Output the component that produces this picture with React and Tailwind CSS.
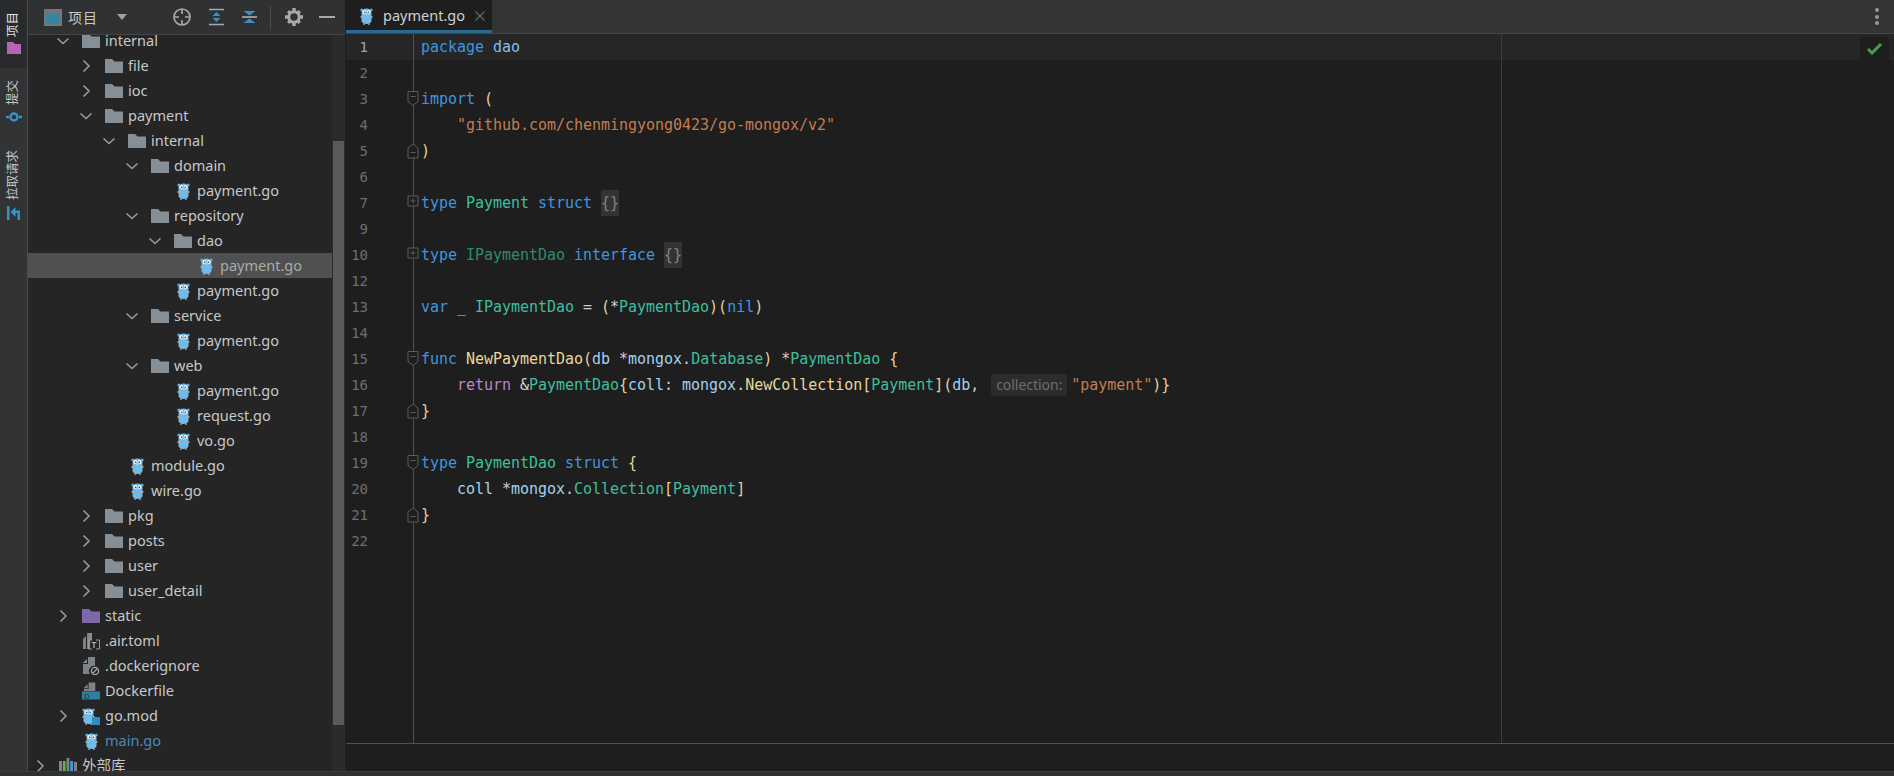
import { Fragment } from "react";

const ui = { fontFamily: '"Noto Sans", "Noto Sans CJK SC", sans-serif' };

// syntax colours
const kw = "text-[#3d96e0]";
const pkg = "text-[#7fbfea]";
const id = "text-[#a3d0ef]";
const ty = "text-[#3fbf9f]";
const tyDim = "text-[#2f8a70]";
const fn = "text-[#e8d79a]";
const br = "text-[#e6cf9f]";
const str = "text-[#c47c50]";
const op = "text-[#cfcfcf]";
const ret = "text-[#c083c9]";

const Gopher = ({ className = "" }) => (
  <svg width="13" height="18" viewBox="0 0 13 18" className={className}>
    <circle cx="1.8" cy="3" r="1.5" fill="#5fa8d8" />
    <circle cx="11.2" cy="3" r="1.5" fill="#5fa8d8" />
    <path d="M1.5 6c0-3 2-4.500 5-4.500s5 1.500 5 4.500v7.500c0 2.300-2 3.500-5 3.500s-5-1.200-5-3.500z" fill="#6fbbec" />
    <rect x="0.6" y="9" width="1.4" height="2" fill="#c9a27a" />
    <rect x="11" y="9" width="1.400" height="2" fill="#c9a27a" />
    <rect x="3" y="16.500" width="2" height="1.200" fill="#c9a27a" />
    <rect x="8" y="16.500" width="2" height="1.200" fill="#c9a27a" />
    <circle cx="4.300" cy="5" r="1.900" fill="#f2f6f8" />
    <circle cx="8.700" cy="5" r="1.900" fill="#f2f6f8" />
    <circle cx="4.700" cy="5.200" r="0.800" fill="#26323a" />
    <circle cx="8.300" cy="5.200" r="0.800" fill="#26323a" />
    <ellipse cx="6.500" cy="7.300" rx="1.100" ry="0.800" fill="#d9c7a8" />
  </svg>
);

const Folder = ({ color = "#868e96" }) => (
  <svg width="18" height="14" viewBox="0 0 18 14">
    <path d="M0 0h7l2.500 2.500H18V14H0z" fill={color} />
  </svg>
);

const Chevron = ({ open }) => (
  <svg width="16" height="16" viewBox="0 0 16 16" fill="none" stroke="#9c9c9c" strokeWidth="1.500">
    {open ? <path d="M2.500 5.500L8 10.500l5.500-5" /> : <path d="M5.500 2.500L11 8l-5.500 5.500" />}
  </svg>
);

const TomlIcon = () => (
  <svg width="18" height="18" viewBox="0 0 18 18">
    <path d="M1 7l3-3v13H1zM5 1h2v16H5z" fill="#7d8286" />
    <path d="M7 1h3v7H7zM7 8h1v9H7z" fill="#8a8f93" />
    <path d="M10 8H6.500v9H10M14 8h3.500v9H14" fill="none" stroke="#9a9a9a" strokeWidth="1" />
    <path d="M9.500 10.500h5M12 10.500V16" stroke="#b5b5b5" strokeWidth="1.200" />
  </svg>
);

const IgnoreIcon = () => (
  <svg width="18" height="18" viewBox="0 0 18 18">
    <path d="M1 5.500L5 2v4H1zM6 0h7v9a5 5 0 0 0-5 8H1V7h5z" fill="#7d8286" />
    <circle cx="13" cy="14" r="3.600" fill="none" stroke="#a5a5a5" strokeWidth="1.300" />
    <path d="M10.800 16.200l4.400-4.400" stroke="#a5a5a5" strokeWidth="1.300" />
  </svg>
);

const DockerIcon = () => (
  <svg width="19" height="18" viewBox="0 0 19 18">
    <path d="M2 5.500L6 2v4H2zM7 0h7v9H2V7h5z" fill="#7d8286" />
    <rect x="0" y="9.500" width="19" height="8.500" fill="#2f7f9f" />
    <text x="2.500" y="17" fontSize="8" fill="#12323f" fontFamily="Liberation Sans">D</text>
  </svg>
);

const GoModIcon = () => (
  <span className="relative block h-[18px] w-[18px]">
    <Gopher />
    <span className="absolute right-0 bottom-0 h-[8px] w-[8px] bg-[#2f8cc4]" />
  </span>
);

const LibIcon = () => (
  <svg width="18" height="16" viewBox="0 0 18 16">
    <rect x="0" y="3" width="3" height="13" fill="#7f8487" />
    <rect x="3.800" y="3" width="2.800" height="13" fill="#62b543" />
    <rect x="7.500" y="0" width="2.800" height="16" fill="#7f8487" />
    <rect x="11.200" y="3" width="2.800" height="13" fill="#389fd6" />
    <rect x="15" y="4" width="3" height="12" fill="#7f8487" />
  </svg>
);

const tree = [
  { d: 0, open: true, name: "internal", icon: "folder" },
  { d: 1, open: false, name: "file", icon: "folder" },
  { d: 1, open: false, name: "ioc", icon: "folder" },
  { d: 1, open: true, name: "payment", icon: "folder" },
  { d: 2, open: true, name: "internal", icon: "folder" },
  { d: 3, open: true, name: "domain", icon: "folder" },
  { d: 4, name: "payment.go", icon: "go" },
  { d: 3, open: true, name: "repository", icon: "folder" },
  { d: 4, open: true, name: "dao", icon: "folder" },
  { d: 5, name: "payment.go", icon: "go", selected: true },
  { d: 4, name: "payment.go", icon: "go" },
  { d: 3, open: true, name: "service", icon: "folder" },
  { d: 4, name: "payment.go", icon: "go" },
  { d: 3, open: true, name: "web", icon: "folder" },
  { d: 4, name: "payment.go", icon: "go" },
  { d: 4, name: "request.go", icon: "go" },
  { d: 4, name: "vo.go", icon: "go" },
  { d: 2, name: "module.go", icon: "go" },
  { d: 2, name: "wire.go", icon: "go" },
  { d: 1, open: false, name: "pkg", icon: "folder" },
  { d: 1, open: false, name: "posts", icon: "folder" },
  { d: 1, open: false, name: "user", icon: "folder" },
  { d: 1, open: false, name: "user_detail", icon: "folder" },
  { d: 0, open: false, name: "static", icon: "static" },
  { d: 0, name: ".air.toml", icon: "toml" },
  { d: 0, name: ".dockerignore", icon: "ignore" },
  { d: 0, name: "Dockerfile", icon: "docker" },
  { d: 0, open: false, name: "go.mod", icon: "gomod" },
  { d: 0, name: "main.go", icon: "go", blue: true },
  { d: -1, open: false, name: "外部库", icon: "lib" },
];

const treeIcon = (icon) => {
  if (icon === "folder") return <Folder />;
  if (icon === "static") return <Folder color="#7f68a8" />;
  if (icon === "go") return <Gopher />;
  if (icon === "toml") return <TomlIcon />;
  if (icon === "ignore") return <IgnoreIcon />;
  if (icon === "docker") return <DockerIcon />;
  if (icon === "gomod") return <GoModIcon />;
  return <LibIcon />;
};

const Locate = () => (
  <svg width="20" height="20" viewBox="0 0 20 20" fill="none" stroke="#a8a8a8" strokeWidth="1.700">
    <circle cx="10" cy="10" r="8" />
    <path d="M10 2v5M10 13v5M2 10h5M13 10h5" />
  </svg>
);

const ExpandAll = () => (
  <svg width="18" height="18" viewBox="0 0 18 18">
    <path d="M1 1.500h15M1 16.500h15" stroke="#a8a8a8" strokeWidth="1.700" />
    <path d="M8.500 4l4 4h-8zM4.500 10h8l-4 4z" fill="#3592c4" />
  </svg>
);

const CollapseAll = () => (
  <svg width="18" height="18" viewBox="0 0 18 18">
    <path d="M1 9h15" stroke="#a8a8a8" strokeWidth="1.700" />
    <path d="M2.500 3h12l-6 4.500zM8.500 10.500l6 4.500h-12z" fill="#3592c4" />
  </svg>
);

const Gear = () => (
  <svg width="18" height="18" viewBox="0 0 18 18">
    <circle cx="9" cy="9" r="5.200" fill="none" stroke="#a8a8a8" strokeWidth="3" />
    <path d="M7.300 0h3.400v3H7.300zM7.300 15h3.400v3H7.300zM0 7.300h3v3.400H0zM15 7.300h3v3.400h-3zM2 4.300L4.300 2l2 2L4 6.300zM11.700 4L13.700 2 16 4.300l-2 2zM2 13.700L4 11.700 6.300 14l-2 2zM11.700 14l2.300-2.300 2 2-2.300 2.300z" fill="#a8a8a8" />
  </svg>
);

const Vtext = ({ children, className }) => (
  <span className={`rotate-180 text-[12.5px] leading-none [writing-mode:vertical-rl] [text-orientation:sideways] ${className}`}>{children}</span>
);

const Stripe = () => (
  <div className="flex w-[28px] shrink-0 flex-col border-r border-[#4a4c4e] bg-[#313335]" style={ui}>
    <div className="flex h-[68px] flex-col items-center gap-[5px] bg-[#282a2b] pt-[12px]">
      <Vtext className="text-[#e4e4e4]">项目</Vtext>
      <svg width="14" height="12" viewBox="0 0 14 12">
        <path d="M0 0h6l2 2h6v10H0z" fill="#b665b5" />
      </svg>
    </div>
    <div className="flex flex-col items-center gap-[6px] pt-[12px]">
      <Vtext className="text-[#c9c9c9]">提交</Vtext>
      <svg width="16" height="12" viewBox="0 0 16 12" fill="none" stroke="#3592c4">
        <circle cx="8" cy="6" r="3.500" strokeWidth="2.400" />
        <path d="M0 6h3M13 6h3" strokeWidth="2.400" />
      </svg>
    </div>
    <div className="flex flex-col items-center gap-[6px] pt-[27px]">
      <Vtext className="text-[#c9c9c9]">拉取请求</Vtext>
      <svg width="13" height="14" viewBox="0 0 13 14" fill="#3592c4">
        <path d="M0 0h2.500v14H0zM3.500 6L8.500 1v3.500H13V14h-2.500V7H8.500v4z" />
      </svg>
    </div>
  </div>
);

const ProjectPanel = () => (
  <div className="flex w-[318px] shrink-0 flex-col overflow-hidden border-r border-[#1e1e1e]" style={ui}>
    <div className="relative z-10 flex h-[35px] shrink-0 items-center border-b border-[#434547] bg-[#2f3133] pl-[16px]">
      <span className="flex h-[17px] w-[18px] items-end border-2 border-t-[4px] border-[#73777a]">
        <span className="block h-full w-full bg-[#38859f]" />
      </span>
      <span className="ml-[6px] w-[40px] text-[14px] tracking-[1px] text-[#c8c8c8]">项目</span>
      <span className="ml-[9px] h-0 w-0 border-x-[5px] border-t-[6px] border-x-transparent border-t-[#a0a0a0]" />
      <span className="ml-[45px] flex"><Locate /></span>
      <span className="ml-[16px] flex"><ExpandAll /></span>
      <span className="ml-[15px] flex"><CollapseAll /></span>
      <span className="ml-[11px] h-[23px] w-px bg-[#4c4e50]" />
      <span className="ml-[14px] flex"><Gear /></span>
      <span className="ml-[16px] h-[2px] w-[16px] bg-[#a8a8a8]" />
    </div>
    <div className="flex min-h-0 flex-1">
      <div className="-mt-[7px] min-w-0 flex-1 bg-[#252525]">
        {tree.map((row, i) => (
          <div
            key={i}
            className={`flex h-[25px] items-center ${row.selected ? "bg-[#4f5050]" : ""}`}
            style={{ paddingLeft: 27 + row.d * 23 }}
          >
            <span className="mr-[11px] flex w-[16px] shrink-0 justify-center">
              {row.open !== undefined && <Chevron open={row.open} />}
            </span>
            <span className="mr-[5px] flex w-[18px] shrink-0 items-center justify-center">{treeIcon(row.icon)}</span>
            <span
              className={`pb-[2px] text-[14.5px] leading-[20px] whitespace-nowrap ${
                row.selected ? "text-[#a9abad]" : row.blue ? "text-[#4a88b8]" : "text-[#c6c8ca]"
              }`}
            >
              {row.name}
            </span>
          </div>
        ))}
      </div>
      <div className="w-[13px] shrink-0 bg-[#2b2b2b] pt-[106px]">
        <div className="mx-auto h-[584px] w-[11px] bg-[#5a5a5a]" />
      </div>
    </div>
  </div>
);

const Fold = ({ kind }) => (
  <svg width="12" height="16" viewBox="0 0 12 16" className="absolute top-[5px] -right-[6px]" fill="#1e1e1e" stroke="#5c5c5c">
    {kind === "start" && <path d="M1 .500h10v10l-5 4-5-4zM3.500 5.500h5" />}
    {kind === "end" && <path d="M1 15v-10l5-4 5 4v10zM3.500 9.500h5" />}
    {kind === "plus" && <path d="M1 1h10v10H1zM3.500 6h5M6 3.500v5" />}
  </svg>
);

const code = [
  { n: 1, current: true, t: [["package", kw], [" "], ["dao", pkg]] },
  { n: 2, t: [] },
  { n: 3, fold: "start", t: [["import", kw], [" "], ["(", br]] },
  { n: 4, t: [['    "github.com/chenmingyong0423/go-mongox/v2"', str]] },
  { n: 5, fold: "end", t: [[")", br]] },
  { n: 6, t: [] },
  { n: 7, fold: "plus", t: [["type", kw], [" "], ["Payment", ty], [" "], ["struct", kw], [" "], ["{}", "folded"]] },
  { n: 9, t: [] },
  { n: 10, fold: "plus", t: [["type", kw], [" "], ["IPaymentDao", tyDim], [" "], ["interface", kw], [" "], ["{}", "folded"]] },
  { n: 12, t: [] },
  { n: 13, t: [["var", kw], [" _ ", id], ["IPaymentDao", ty], [" = ", op], ["(", br], ["*", op], ["PaymentDao", ty], [")(", br], ["nil", kw], [")", br]] },
  { n: 14, t: [] },
  { n: 15, fold: "start", t: [["func", kw], [" "], ["NewPaymentDao", fn], ["(", br], ["db", id], [" *", op], ["mongox", id], [".", op], ["Database", ty], [")", br], [" *", op], ["PaymentDao", ty], [" "], ["{", br]] },
  { n: 16, t: [["    "], ["return", ret], [" &", op], ["PaymentDao", ty], ["{", br], ["coll", id], [": ", op], ["mongox", id], [".", op], ["NewCollection", fn], ["[", br], ["Payment", ty], ["]", br], ["(", br], ["db", id], [", ", op], ["collection:", "hint"], ['"payment"', str], [")}", br]] },
  { n: 17, fold: "end", t: [["}", br]] },
  { n: 18, t: [] },
  { n: 19, fold: "start", t: [["type", kw], [" "], ["PaymentDao", ty], [" "], ["struct", kw], [" "], ["{", br]] },
  { n: 20, t: [["    "], ["coll", id], [" *", op], ["mongox", id], [".", op], ["Collection", ty], ["[", br], ["Payment", ty], ["]", br]] },
  { n: 21, fold: "end", t: [["}", br]] },
  { n: 22, t: [] },
];

const Token = ({ text, cls }) => {
  if (cls === "folded")
    return <span className="inline-block h-[26px] bg-[#333333] align-top text-[#858585]">{text}</span>;
  if (cls === "hint")
    return (
      <span
        className="mt-[2px] mr-[4px] ml-[3px] inline-block h-[22px] w-[76px] rounded-[3px] bg-[#2c2c2c] text-center align-top text-[14px] leading-[21px] text-[#6e6e6e]"
        style={ui}
      >
        {text}
      </span>
    );
  return <span className={cls}>{text}</span>;
};

const Editor = () => (
  <div className="flex min-w-0 flex-1 flex-col bg-[#1e1e1e]">
    <div className="flex h-[34px] shrink-0 items-stretch border-b border-[#464646] bg-[#333535]">
      <div className="flex w-[146px] items-center border-b-[3px] border-[#2a6a92] bg-[#1e1e1e] pt-[2px] pl-[14px]" style={ui}>
        <Gopher />
        <span className="ml-[10px] text-[14.5px] text-[#d0d0d0]">payment.go</span>
        <svg width="10" height="10" viewBox="0 0 10 10" className="ml-[10px]" stroke="#6a6a6a" strokeWidth="1.100">
          <path d="M.5.500l9 9M9.500.500l-9 9" />
        </svg>
      </div>
      <div className="mr-[15px] ml-auto flex flex-col justify-center gap-[2.500px]">
        <span className="h-[4px] w-[4px] rounded-full bg-[#9a9a9a]" />
        <span className="h-[4px] w-[4px] rounded-full bg-[#9a9a9a]" />
        <span className="h-[4px] w-[4px] rounded-full bg-[#9a9a9a]" />
      </div>
    </div>
    <div
      className="relative flex min-h-0 flex-1 flex-col text-[15px] leading-[27px] tracking-[-0.03px] whitespace-pre"
      style={{ fontFamily: '"DejaVu Sans Mono", monospace' }}
    >
      {code.map((line) => (
        <div key={line.n} className={`flex h-[26px] shrink-0 ${line.current ? "bg-[#262626]" : ""}`}>
          <div className="relative w-[68px] shrink-0 border-r border-[#505050] pr-[45px] text-right text-[14px] text-[#6f6f6f]">
            <span className={line.current ? "text-[#a6a6a6]" : ""}>{line.n}</span>
            {line.fold && <Fold kind={line.fold} />}
          </div>
          <div className="w-[1088px] shrink-0 border-r border-[#3c3c3c] pl-[7px] text-[#cfcfcf]">
            {line.t.map(([text, cls], i) => (
              <Fragment key={i}>
                <Token text={text} cls={cls} />
              </Fragment>
            ))}
          </div>
        </div>
      ))}
      <div className="flex min-h-0 flex-1">
        <div className="w-[68px] shrink-0 border-r border-[#505050]" />
        <div className="w-[1088px] shrink-0 border-r border-[#3c3c3c]" />
      </div>
      <div className="absolute top-[3px] right-[5px] flex h-[23px] w-[29px] items-center justify-center rounded-t-[3px] bg-[#1e1e1e]">
        <svg width="15" height="13" viewBox="0 0 15 13" fill="none" stroke="#499c54" strokeWidth="3">
          <path d="M1 7l4 4 9-9" />
        </svg>
      </div>
    </div>
    <div className="h-[28px] shrink-0 border-t border-[#505050] bg-[#1e1e1e]" />
  </div>
);

export default function App() {
  return (
    <div className="flex h-[776px] w-[1894px] flex-col overflow-hidden bg-[#1e1e1e]">
      <div className="flex min-h-0 flex-1">
        <Stripe />
        <ProjectPanel />
        <Editor />
      </div>
      <div className="h-[5px] shrink-0 border-t border-[#3a3a3a] bg-[#2f3030]" />
    </div>
  );
}
